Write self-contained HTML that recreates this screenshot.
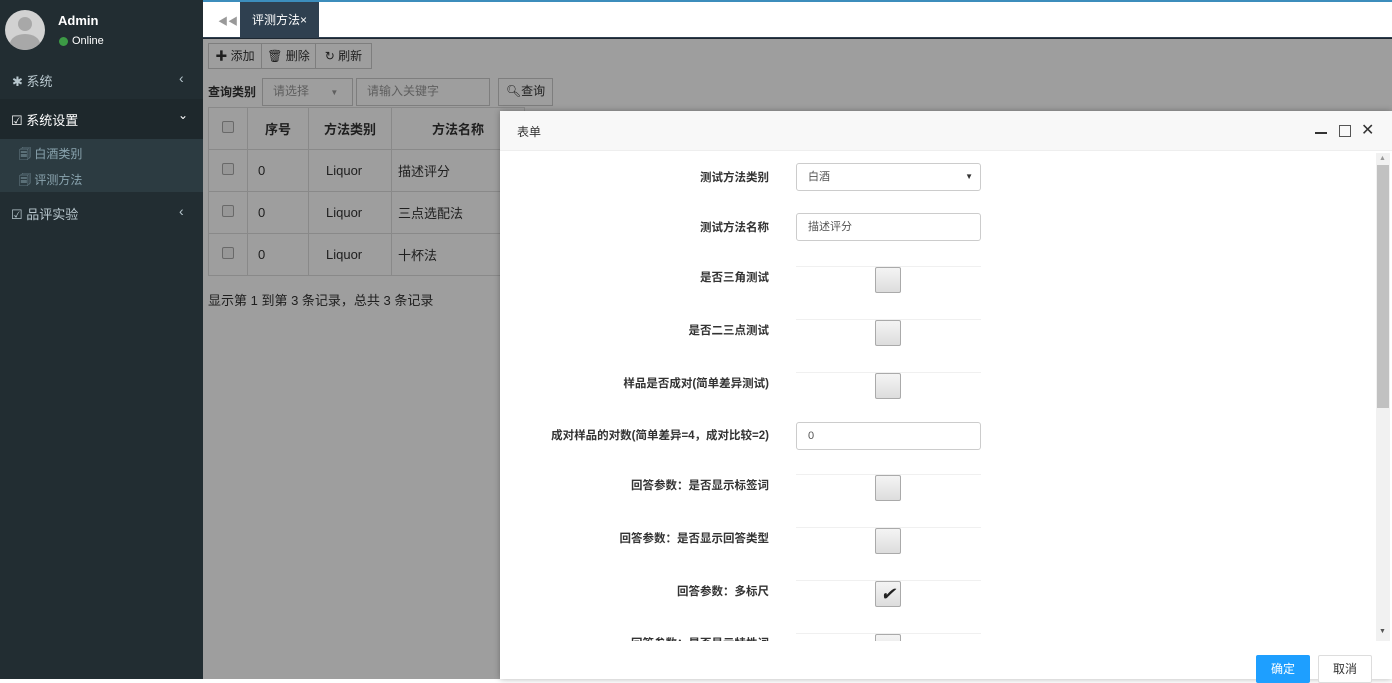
<!DOCTYPE html>
<html><head><meta charset="utf-8"><style>
*{box-sizing:border-box;margin:0;padding:0}
body{width:1392px;height:679px;overflow:hidden;position:relative;font-family:"Liberation Sans","Noto Sans CJK SC",sans-serif;font-size:12px;background:#fff}
.side{position:absolute;left:0;top:0;width:203px;height:679px;background:#222d32;color:#b8c7ce}
.main{position:absolute;left:203px;top:0;right:0;bottom:0;background:#fff}
.abs{position:absolute}
.ov{position:absolute;left:203px;top:38px;right:0;bottom:0;background:rgba(0,0,0,0.38)}
.btn{position:absolute;border:1px solid #ccc;background:#fff;height:26px;line-height:24px;font-size:12px;color:#333;text-align:center;white-space:nowrap}
table{border-collapse:collapse;position:absolute;left:208px;top:107px;font-size:13px;color:#333;table-layout:fixed;width:317px}
td,th{border:1px solid #ddd;height:42px;padding:0 10px;text-align:left;white-space:nowrap}
th{font-weight:bold;text-align:center}
.cb{display:inline-block;width:12px;height:12px;border:1px solid #aaa;border-radius:2px;background:#f4f4f4}
.modal{position:absolute;left:500px;top:111px;width:892px;height:568px;background:#fff;box-shadow:0 0 6px rgba(0,0,0,.3)}
.lab{position:absolute;right:607px;font-size:11.5px;font-weight:bold;color:#333;white-space:nowrap}
.inp{position:absolute;left:296px;width:185px;height:28px;border:1px solid #ccc;border-radius:3px;font-size:11px;color:#555;padding-left:11px;line-height:26px}
.sw{position:absolute;left:296px;width:185px;height:38px;border-top:1px solid #f0f0f0}
.sw i{position:absolute;left:79px;top:0;width:26px;height:26px;border:1px solid #aaa;border-radius:2px;background:linear-gradient(#f4f4f4,#ddd)}
</style></head><body>
<div class="side">
 <div class="abs" style="left:5px;top:10px;width:40px;height:40px;border-radius:50%;background:#d2d2d2;overflow:hidden"><div class="abs" style="left:13px;top:7px;width:14px;height:14px;border-radius:50%;background:#a8a8a8"></div><div class="abs" style="left:5px;top:24px;width:30px;height:20px;border-radius:50% 50% 0 0;background:#a8a8a8"></div></div>
 <div class="abs" style="left:58px;top:13px;color:#fff;font-weight:bold;font-size:13px">Admin</div>
 <div class="abs" style="left:59px;top:37px;width:9px;height:9px;border-radius:50%;background:#3c9a45"></div>
 <div class="abs" style="left:72px;top:35px;color:#fff;font-size:11px">Online</div>
 <div class="abs" style="left:12px;top:71px;color:#b8c7ce;font-size:13px">✱ 系统</div><div class="abs" style="left:179px;top:70px;font-size:14px">‹</div>
 <div class="abs" style="left:0;top:99px;width:203px;height:40px;background:#1e282c"></div>
 <div class="abs" style="left:11px;top:110px;color:#fff;font-size:13px">☑ 系统设置</div><div class="abs" style="left:178px;top:108px;color:#fff;font-size:12px">⌄</div>
 <div class="abs" style="left:0;top:139px;width:203px;height:53px;background:#2c3b41"></div>
 <div class="abs" style="left:19px;top:145px;color:#8aa4af;font-size:12px">🗐 白酒类别</div>
 <div class="abs" style="left:19px;top:171px;color:#8aa4af;font-size:12px">🗐 评测方法</div>
 <div class="abs" style="left:11px;top:204px;font-size:13px">☑ 品评实验</div><div class="abs" style="left:179px;top:203px;font-size:14px">‹</div>
</div>
<div class="main">
 <div class="abs" style="left:0;top:0;right:0;height:2px;background:#3c8dbc"></div>
 <div class="abs" style="left:15px;top:13px;color:#999;font-size:10px">◀◀</div>
 <div class="abs" style="left:37px;top:2px;width:79px;height:36px;background:#2f4050;color:#fff;font-size:12px;line-height:36px;padding-left:12px">评测方法×</div>
 <div class="abs" style="left:0;top:37px;right:0;height:2px;background:#2f4050"></div>
</div>
<div class="btn" style="left:208px;top:43px;width:54px">✚ 添加</div>
<div class="btn" style="left:261px;top:43px;width:55px">🗑 删除</div>
<div class="btn" style="left:315px;top:43px;width:57px">↻ 刷新</div>
<div class="abs" style="left:208px;top:83px;font-weight:bold;font-size:12px;color:#333">查询类别</div>
<div class="btn" style="left:262px;top:78px;width:91px;text-align:left;padding-left:10px;color:#999;height:28px">请选择 <span style="margin-left:18px;font-size:8px">▼</span></div>
<div class="btn" style="left:356px;top:78px;width:134px;text-align:left;padding-left:10px;color:#999;height:28px">请输入关键字</div>
<div class="btn" style="left:498px;top:78px;width:55px;height:28px">🔍︎查询</div>
<table><tr><th style="width:39px"><span class="cb"></span></th><th style="width:61px">序号</th><th style="width:83px">方法类别</th><th>方法名称</th></tr>
<tr><td style="text-align:center"><span class="cb"></span></td><td>0</td><td style="padding-left:17px">Liquor</td><td style="padding-left:6px">描述评分</td></tr>
<tr><td style="text-align:center"><span class="cb"></span></td><td>0</td><td style="padding-left:17px">Liquor</td><td style="padding-left:6px">三点选配法</td></tr>
<tr><td style="text-align:center"><span class="cb"></span></td><td>0</td><td style="padding-left:17px">Liquor</td><td style="padding-left:6px">十杯法</td></tr></table>
<div class="abs" style="left:208px;top:290px;font-size:13px;color:#333">显示第 1 到第 3 条记录，总共 3 条记录</div>
<div class="ov"></div>
<div class="modal">
 <div class="abs" style="left:0;top:0;width:892px;height:40px;background:#f8f8f8;border-bottom:1px solid #eee"></div>
 <div class="abs" style="left:17px;top:12px;font-size:12px;color:#333">表单</div>
 <div class="abs" style="left:815px;top:21px;width:12px;height:2px;background:#333"></div>
 <div class="abs" style="left:839px;top:14px;width:12px;height:12px;border:1px solid #555"></div>
 <div class="abs" style="left:861px;top:9px;font-size:16px;color:#333">✕</div>
 <div class="abs" style="left:876px;top:42px;width:14px;height:488px;background:#f1f1f1"><div class="abs" style="left:1px;top:12px;width:12px;height:243px;background:#c1c1c1"></div><div class="abs" style="left:3px;top:2px;font-size:7px;color:#999">▲</div><div class="abs" style="left:3px;top:475px;font-size:7px;color:#555">▼</div></div>
 <div style="position:absolute;left:0;top:40px;width:876px;height:490px;overflow:hidden">
  <div class="lab" style="top:18px">测试方法类别</div><div class="inp" style="top:12px">白酒<span style="position:absolute;right:7px;font-size:8px;color:#333">▼</span></div>
  <div class="lab" style="top:68px">测试方法名称</div><div class="inp" style="top:62px">描述评分</div>
  <div class="lab" style="top:118px">是否三角测试</div><div class="sw" style="top:115px"><i></i></div>
  <div class="lab" style="top:171px">是否二三点测试</div><div class="sw" style="top:168px"><i></i></div>
  <div class="lab" style="top:224px">样品是否成对(简单差异测试)</div><div class="sw" style="top:221px"><i></i></div>
  <div class="lab" style="top:276px">成对样品的对数(简单差异=4，成对比较=2)</div><div class="inp" style="top:271px">0</div>
  <div class="lab" style="top:326px">回答参数：是否显示标签词</div><div class="sw" style="top:323px"><i></i></div>
  <div class="lab" style="top:379px">回答参数：是否显示回答类型</div><div class="sw" style="top:376px"><i></i></div>
  <div class="lab" style="top:432px">回答参数：多标尺</div><div class="sw" style="top:429px"><i style="text-align:center;font-size:18px;line-height:24px;color:#222">✔</i></div>
  <div class="lab" style="top:484px">回答参数：是否显示特性词</div><div class="sw" style="top:482px"><i></i></div>
 </div>
 <div class="abs" style="left:756px;top:544px;width:54px;height:28px;background:#1e9fff;color:#fff;text-align:center;line-height:28px;font-size:12px;border-radius:2px">确定</div>
 <div class="abs" style="left:818px;top:544px;width:54px;height:28px;border:1px solid #ddd;background:#fff;color:#333;text-align:center;line-height:26px;font-size:12px;border-radius:2px">取消</div>
</div>
</body></html>
